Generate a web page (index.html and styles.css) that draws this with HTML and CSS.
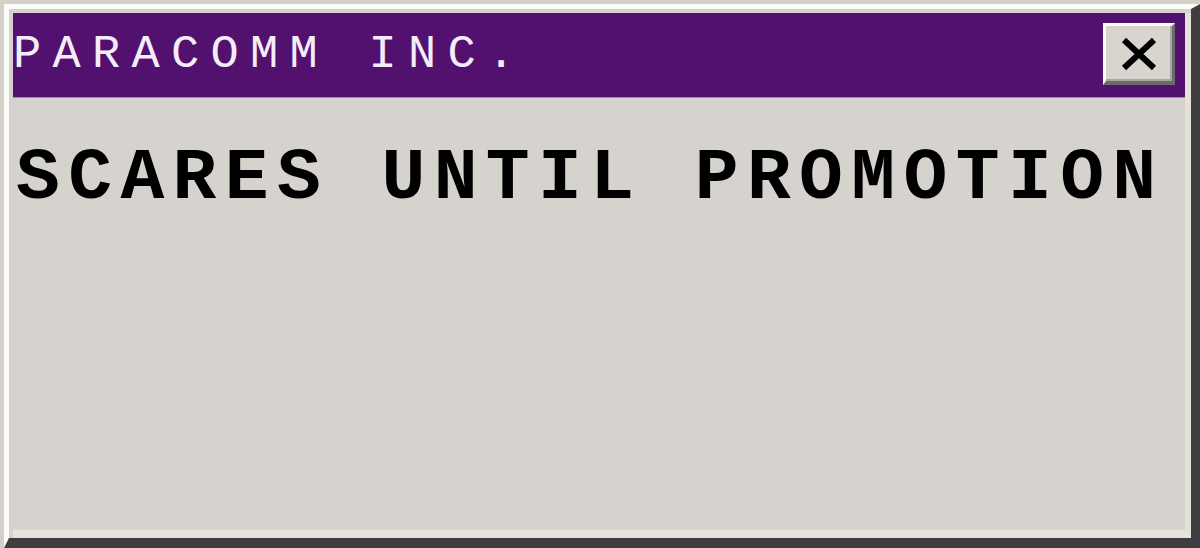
FILE: index.html
```html
<!DOCTYPE html>
<html>
<head>
<meta charset="utf-8">
<link rel="stylesheet" href="styles.css">
</head>
<body>
<div class="screen">
  <div class="window">
    <div class="frame">
      <div class="titlebar">
        <div class="title">PARACOMM INC.</div>
        <div class="close">
          <svg width="40" height="34" viewBox="0 0 40 34"><path d="M5 3 L35 31 M35 3 L5 31" stroke="#000" stroke-width="6"/></svg>
        </div>
      </div>
      <div class="content">
        <div class="message">SCARES UNTIL PROMOTION</div>
      </div>
    </div>
  </div>
</div>
</body>
</html>
```
FILE: styles.css
```css
* { box-sizing: border-box; }
html, body { margin: 0; padding: 0; }
body { width: 1200px; height: 548px; overflow: hidden; background: #d4d0c8; }
.screen {
  width: 1200px;
  height: 548px;
  padding: 4px 0 0 4px;
  background: #d4d0c8;
  display: flex;
}
.window {
  flex: 1;
  display: flex;
  border-left: 5px solid #fbfbf8;
  border-top: 5px solid #fbfbf8;
  border-right: 9px solid #3e3e40;
  border-bottom: 10px solid #3e3e40;
  background: #d6d3ce;
  padding: 4px 0 0 4px;
}
.frame {
  flex: 1;
  display: flex;
  flex-direction: column;
  border-right: 6px solid #e4e2d8;
  border-bottom: 8px solid #e6e4da;
}
.titlebar {
  height: 85px;
  background: #53116f;
  border-bottom: 1px solid #8a94a8;
  display: flex;
  align-items: center;
  justify-content: space-between;
  padding: 0 10px 0 0;
}
.title {
  align-self: flex-start;
  margin-top: 18px;
  font-family: "Liberation Mono", "Courier New", monospace;
  font-size: 47px;
  letter-spacing: 11.3px;
  color: #f4ecf9;
  line-height: 1;
  white-space: pre;
}
.close {
  width: 72px;
  height: 62px;
  background: #d8d5cf;
  border-top: 3px solid #fbfbfa;
  border-left: 3px solid #fbfbfa;
  border-right: 3px solid #6e6c6a;
  border-bottom: 4px solid #6e6c6a;
  box-shadow: inset -2px -2px 0 #a8a6a2;
  display: flex;
  align-items: center;
  justify-content: center;
  margin-top: -2px;
}
.content {
  flex: 1;
  background: #d6d3ce;
  padding: 44px 0 0 3px;
}
.message {
  font-family: "Liberation Mono", "Courier New", monospace;
  font-weight: bold;
  font-size: 73px;
  letter-spacing: 8.4px;
  color: #000;
  line-height: 1;
  white-space: pre;
}
```
